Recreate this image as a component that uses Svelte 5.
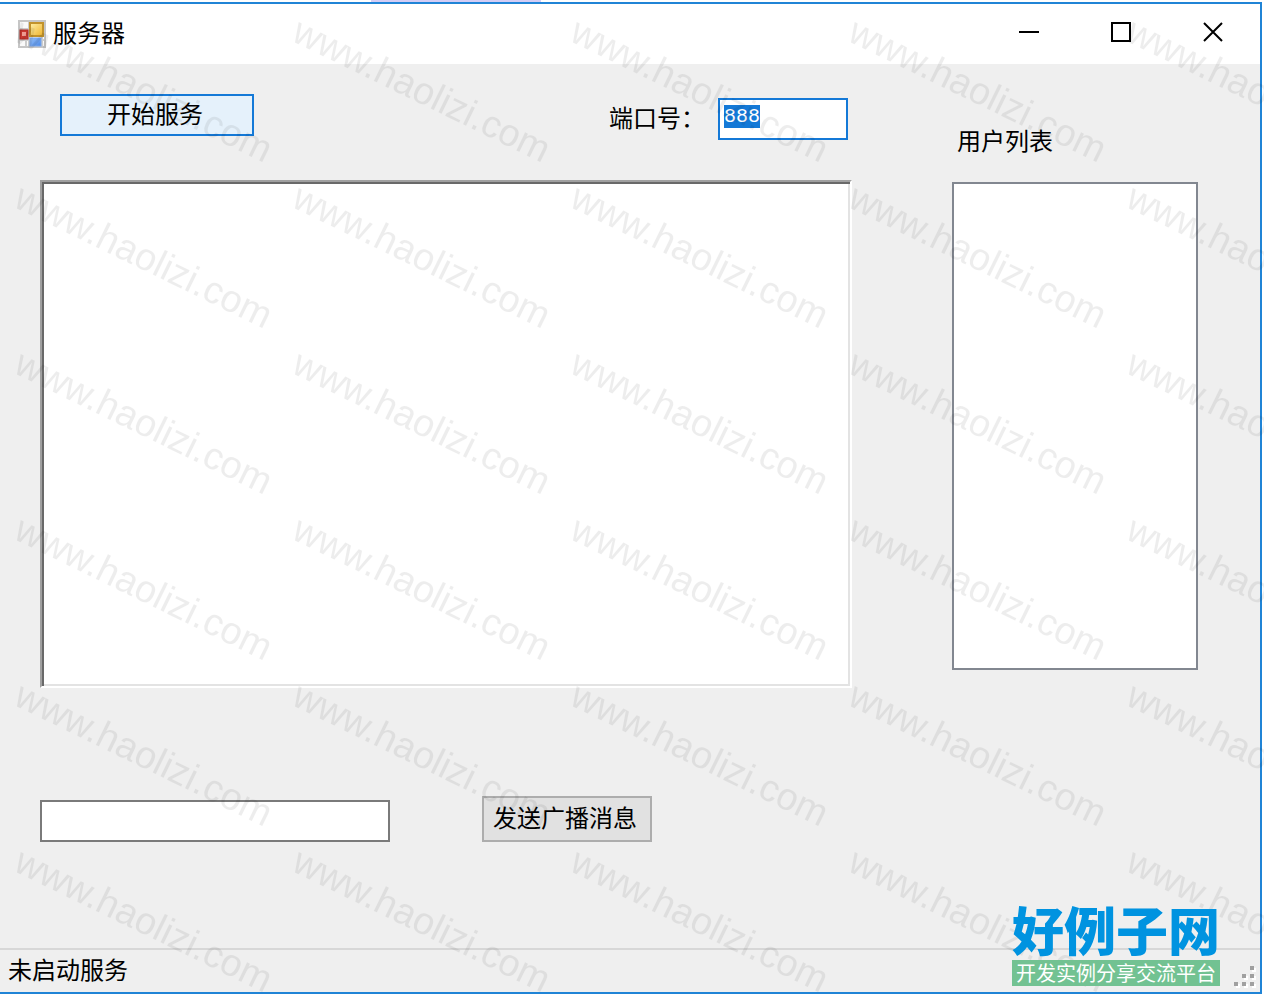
<script>
	import { onMount } from 'svelte';

	let port = '888';
	let message = '';
	let log = '';
	let status = '未启动服务';
	let portInput;

	onMount(() => {
		portInput.focus();
		portInput.select();
	});
</script>

<div class="desktop">
	<div class="behind"></div>
	<div class="window">
		<header class="title-bar">
			<svg class="app-icon" width="28" height="28" viewBox="0 0 28 28">
				<defs>
					<linearGradient id="gold" x1="0" y1="0" x2="1" y2="1">
						<stop offset="0" stop-color="#fff0a8" />
						<stop offset="1" stop-color="#eeb32c" />
					</linearGradient>
					<linearGradient id="blue" x1="0" y1="0" x2="1" y2="1">
						<stop offset="0" stop-color="#94c0fa" />
						<stop offset="1" stop-color="#4b88e6" />
					</linearGradient>
				</defs>
				<rect x="1" y="1" width="26" height="26" fill="#fafafa" stroke="#c6c6c6" stroke-width="2" />
				<path d="M2 9h9M2 20h24M8 20v6M11 2v24M24 17v9" stroke="#cccccc" stroke-width="2" />
				<rect x="12" y="3" width="13" height="13" fill="url(#gold)" stroke="#c2932c" stroke-width="2" />
				<rect x="2" y="10" width="8" height="9" fill="#c9382f" stroke="#b02a24" stroke-width="1" />
				<rect x="4" y="12" width="4" height="4" fill="#ee9a90" />
				<rect x="12" y="18" width="11" height="8" fill="url(#blue)" stroke="#7ba6ea" />
			</svg>
			<h1>服务器</h1>
			<div class="window-buttons">
				<button aria-label="最小化">
					<svg width="20" height="20" viewBox="0 0 20 20"><path d="M0 10h20" /></svg>
				</button>
				<button aria-label="最大化">
					<svg width="20" height="20" viewBox="0 0 20 20"><path d="M1 1h18v18H1z" /></svg>
				</button>
				<button aria-label="关闭">
					<svg width="20" height="20" viewBox="0 0 20 20"><path d="M1 1l18 18M19 1L1 19" /></svg>
				</button>
			</div>
		</header>

		<main>
			<section class="chat">
				<div class="toolbar">
					<button class="btn start">开始服务</button>
					<div class="port">
						<label for="port">端口号：</label>
						<input id="port" type="text" bind:this={portInput} bind:value={port} />
					</div>
				</div>
				<textarea class="log" aria-label="消息记录" readonly value={log}></textarea>
				<div class="send">
					<input type="text" aria-label="广播消息" bind:value={message} />
					<button class="btn broadcast">发送广播消息</button>
				</div>
			</section>
			<section class="users">
				<label for="users">用户列表</label>
				<select id="users" size="10"></select>
			</section>
		</main>

		<footer class="status-bar">
			<span>{status}</span>
			<svg class="grip" width="22" height="22" viewBox="0 0 22 22">
				{#each [[16, 0], [8, 8], [16, 8], [0, 16], [8, 16], [16, 16]] as [x, y]}
					<rect x={x + 2} y={y + 2} width="4" height="4" fill="#fff" />
					<rect {x} {y} width="4" height="4" fill="#a0a0a0" />
				{/each}
			</svg>
		</footer>
	</div>

	<svg class="watermark" width="100%" height="100%">
		<defs>
			<pattern id="mark" x="10" y="10" width="278" height="166" patternUnits="userSpaceOnUse">
				<text transform="translate(2 30) rotate(26)">www.haolizi.com</text>
			</pattern>
		</defs>
		<rect x="10" y="10" width="100%" height="100%" fill="url(#mark)" />
	</svg>

	<div class="brand">
		<strong>好例子网</strong>
		<span>开发实例分享交流平台</span>
	</div>
</div>

<style>
	:global(body) {
		margin: 0;
		background: #fff;
	}

	.desktop {
		position: relative;
		box-sizing: border-box;
		display: flex;
		flex-direction: column;
		min-height: 100vh;
		padding: 0 2px 2px 0;
		overflow: hidden;
		font: 24px/32px 'Liberation Sans', 'Noto Sans CJK SC', sans-serif;
		color: #000;
	}

	.behind {
		width: 170px;
		height: 2px;
		margin-left: 371px;
		background: #d3cdf5;
	}

	.window {
		flex: 1;
		display: flex;
		flex-direction: column;
		border: 2px solid #2084d6;
		border-left: none;
		background: #efefef;
	}

	.title-bar {
		display: flex;
		align-items: center;
		box-sizing: border-box;
		height: 60px;
		padding: 0 1px 0 18px;
		background: #fff;
	}

	h1 {
		flex: 1;
		margin: 0 0 0 7px;
		font-size: 24px;
		font-weight: 400;
	}

	.window-buttons {
		display: flex;
		align-self: stretch;
	}

	.window-buttons button {
		display: grid;
		place-items: center;
		width: 92px;
		padding: 0 0 4px;
		border: none;
		background: none;
	}

	.window-buttons path {
		fill: none;
		stroke: #000;
		stroke-width: 2;
	}

	main {
		flex: 1;
		display: grid;
		grid-template-columns: minmax(0, 1fr) 246px;
		column-gap: 100px;
		padding: 30px 62px 106px 40px;
	}

	.chat {
		display: flex;
		flex-direction: column;
	}

	.toolbar {
		display: flex;
		justify-content: space-between;
		align-items: flex-start;
		height: 86px;
		padding: 0 4px 0 20px;
	}

	.btn {
		box-sizing: border-box;
		height: 46px;
		padding: 0 4px 0 0;
		border: 2px solid #adadad;
		background: #e1e1e1;
		font: inherit;
		color: inherit;
	}

	.start {
		width: 194px;
		height: 42px;
		border-color: #1479d7;
		background: #e5f1fb;
	}

	.broadcast {
		width: 170px;
	}

	input {
		box-sizing: border-box;
		height: 42px;
		padding: 4px 4px 10px;
		border: 2px solid #7a7a7a;
		border-radius: 0;
		background: #fff;
		font: 20px/24px 'Liberation Mono', 'Noto Sans CJK SC', monospace;
		outline: none;
	}

	input:focus {
		border-color: #1479d7;
	}

	input::selection {
		background: #1479d7;
		color: #fff;
	}

	.port {
		display: flex;
		align-items: center;
		gap: 13px;
		padding-top: 4px;
	}

	.port input {
		width: 130px;
	}

	.log {
		flex: 1;
		box-sizing: border-box;
		width: 100%;
		min-height: 200px;
		padding: 4px;
		border: 2px solid;
		border-color: #a0a0a0 #fff #fff #a0a0a0;
		background: #fff;
		box-shadow: inset 2px 2px #696969, inset -2px -2px #e3e3e3;
		font: inherit;
		resize: none;
		outline: none;
	}

	.send {
		display: flex;
		align-items: flex-end;
		gap: 92px;
		margin-top: 108px;
	}

	.send input {
		width: 350px;
	}

	.users {
		display: flex;
		flex-direction: column;
		padding: 32px 0 172px;
	}

	.users label {
		padding-left: 5px;
		margin-bottom: 24px;
	}

	.users select {
		flex: 1;
		border: 2px solid #828790;
		border-radius: 0;
		background: #fff;
		font: inherit;
		outline: none;
	}

	.status-bar {
		display: flex;
		justify-content: space-between;
		align-items: center;
		height: 42px;
		padding: 0 4px 0 8px;
		border-top: 2px solid #d7d7d7;
	}

	.grip {
		align-self: flex-end;
		margin-bottom: 4px;
	}

	.watermark {
		position: absolute;
		inset: 0;
		pointer-events: none;
	}

	.watermark text {
		font: 38px 'Liberation Sans', sans-serif;
		fill: rgba(0, 0, 0, 0.07);
	}

	.brand {
		position: absolute;
		right: 44px;
		bottom: 10px;
		display: flex;
		flex-direction: column;
		align-items: center;
		gap: 3px;
		font-family: 'Noto Sans CJK SC', sans-serif;
	}

	.brand strong {
		font-size: 52px;
		font-weight: 900;
		line-height: 56px;
		color: #0093e0;
	}

	.brand span {
		width: 100%;
		background: #72c292;
		font-size: 20px;
		line-height: 26px;
		text-align: center;
		color: #fff;
	}
</style>
